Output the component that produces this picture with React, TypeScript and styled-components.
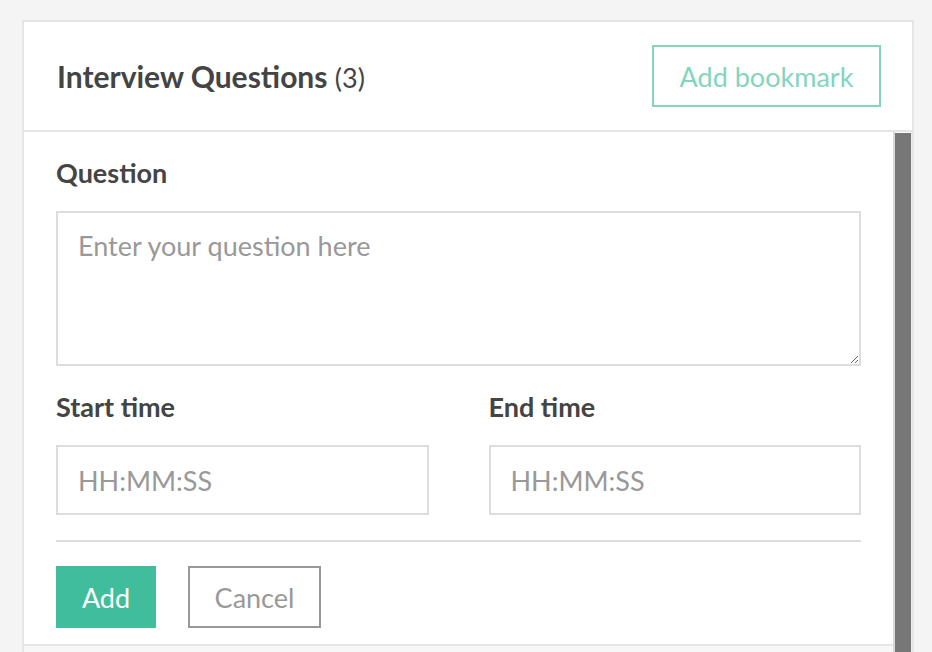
import React from 'react'
import styled, { createGlobalStyle } from 'styled-components'

const GlobalStyle = createGlobalStyle`
  html, body {
    margin: 0;
    padding: 0;
    background: #f4f4f4;
    overflow: hidden;
    font-family: Lato, 'Noto Sans', sans-serif;
  }
  * { box-sizing: border-box; }
`

const colors = {
  text: '#444444',
  border: '#e6e6e6',
  field: '#dddddd',
  placeholder: '#999999',
  green: '#40be9b',
  greenLight: '#83d5bd',
}

const Page = styled.div`
  padding: 20px 18px 0 22px;
`

const Panel = styled.section`
  width: 892px;
  background: #fff;
  border: 2px solid ${colors.border};
  display: flex;
  flex-direction: column;
`

const Header = styled.header`
  height: 110px;
  padding: 0 31px 0 33px;
  display: flex;
  align-items: center;
  justify-content: space-between;
  border-bottom: 2px solid ${colors.border};
`

const Title = styled.h2`
  margin: 0;
  font-size: 30px;
  font-weight: 700;
  color: ${colors.text};
`

const Count = styled.span`
  font-weight: 400;
  font-size: 27px;
`

const OutlineButton = styled.button`
  width: 229px;
  height: 62px;
  padding: 0;
  background: #fff;
  border: 2px solid ${colors.greenLight};
  color: ${colors.greenLight};
  font-family: inherit;
  font-size: 27px;
  cursor: pointer;
`

const Body = styled.div`
  height: 700px;
  display: flex;
  overflow: hidden;
`

const Content = styled.div`
  flex: 1;
  min-width: 0;
`

/* drawn scrollbar: track with a tall thumb running past the fold */
const ScrollTrack = styled.div`
  width: 19px;
  flex-shrink: 0;
  background: #fafafa;
  border-left: 2px solid #d8d8d8;
  border-right: 1px solid #ececec;
  padding-top: 1px;
`

const ScrollThumb = styled.div<{ $size: number }>`
  height: ${(p) => p.$size}px;
  background: #777;
`

const Form = styled.form`
  padding: 24px 32px 16px 32px;
  border-bottom: 2px solid ${colors.border};
`

const Label = styled.label`
  display: block;
  font-size: 27px;
  font-weight: 700;
  color: ${colors.text};
  margin-bottom: 22px;
`

const TextArea = styled.textarea`
  display: block;
  width: 100%;
  height: 155px;
  margin: 0;
  border: 2px solid ${colors.field};
  padding: 16px 20px;
  font-family: inherit;
  font-size: 27px;
  color: ${colors.text};
  resize: vertical;
  outline: none;
  &::placeholder { color: ${colors.placeholder}; }
`

const TimeRow = styled.div`
  display: grid;
  grid-template-columns: minmax(0, 1fr) minmax(0, 1fr);
  column-gap: 60px;
  margin-top: 24px;
`

const Field = styled.div`
  display: flex;
  flex-direction: column;
  min-width: 0;
`

const Input = styled.input`
  width: 100%;
  min-width: 0;
  height: 70px;
  margin: 0;
  border: 2px solid ${colors.field};
  padding: 0 20px;
  font-family: inherit;
  font-size: 27px;
  color: ${colors.text};
  outline: none;
  &::placeholder { color: ${colors.placeholder}; }
`

const Divider = styled.hr`
  margin: 25px 0 0;
  border: none;
  border-top: 2px solid ${colors.field};
`

const Actions = styled.div`
  display: flex;
  gap: 32px;
  margin-top: 24px;
`

const ActionButton = styled.button<{ $primary?: boolean }>`
  height: 62px;
  padding: 0;
  width: ${(p) => (p.$primary ? '100px' : '133px')};
  font-family: inherit;
  font-size: 27px;
  cursor: pointer;
  background: ${(p) => (p.$primary ? colors.green : '#fff')};
  color: ${(p) => (p.$primary ? '#fff' : colors.placeholder)};
  border: 2px solid ${(p) => (p.$primary ? colors.green : colors.placeholder)};
`

const QuestionList = styled.div`
  background: #f7f7f7;
  min-height: 240px;
`

export default function App() {
  return (
    <>
      <GlobalStyle />
      <Page>
        <Panel>
          <Header>
            <Title>
              Interview Questions <Count>(3)</Count>
            </Title>
            <OutlineButton type="button">Add bookmark</OutlineButton>
          </Header>
          <Body>
            <Content>
              <Form onSubmit={(e) => e.preventDefault()}>
                <Label htmlFor="question">Question</Label>
                <TextArea id="question" placeholder="Enter your question here" />
                <TimeRow>
                  <Field>
                    <Label htmlFor="start">Start time</Label>
                    <Input id="start" placeholder="HH:MM:SS" />
                  </Field>
                  <Field>
                    <Label htmlFor="end">End time</Label>
                    <Input id="end" placeholder="HH:MM:SS" />
                  </Field>
                </TimeRow>
                <Divider />
                <Actions>
                  <ActionButton $primary type="submit">Add</ActionButton>
                  <ActionButton type="button">Cancel</ActionButton>
                </Actions>
              </Form>
              <QuestionList />
            </Content>
            <ScrollTrack>
              <ScrollThumb $size={580} />
            </ScrollTrack>
          </Body>
        </Panel>
      </Page>
    </>
  )
}
